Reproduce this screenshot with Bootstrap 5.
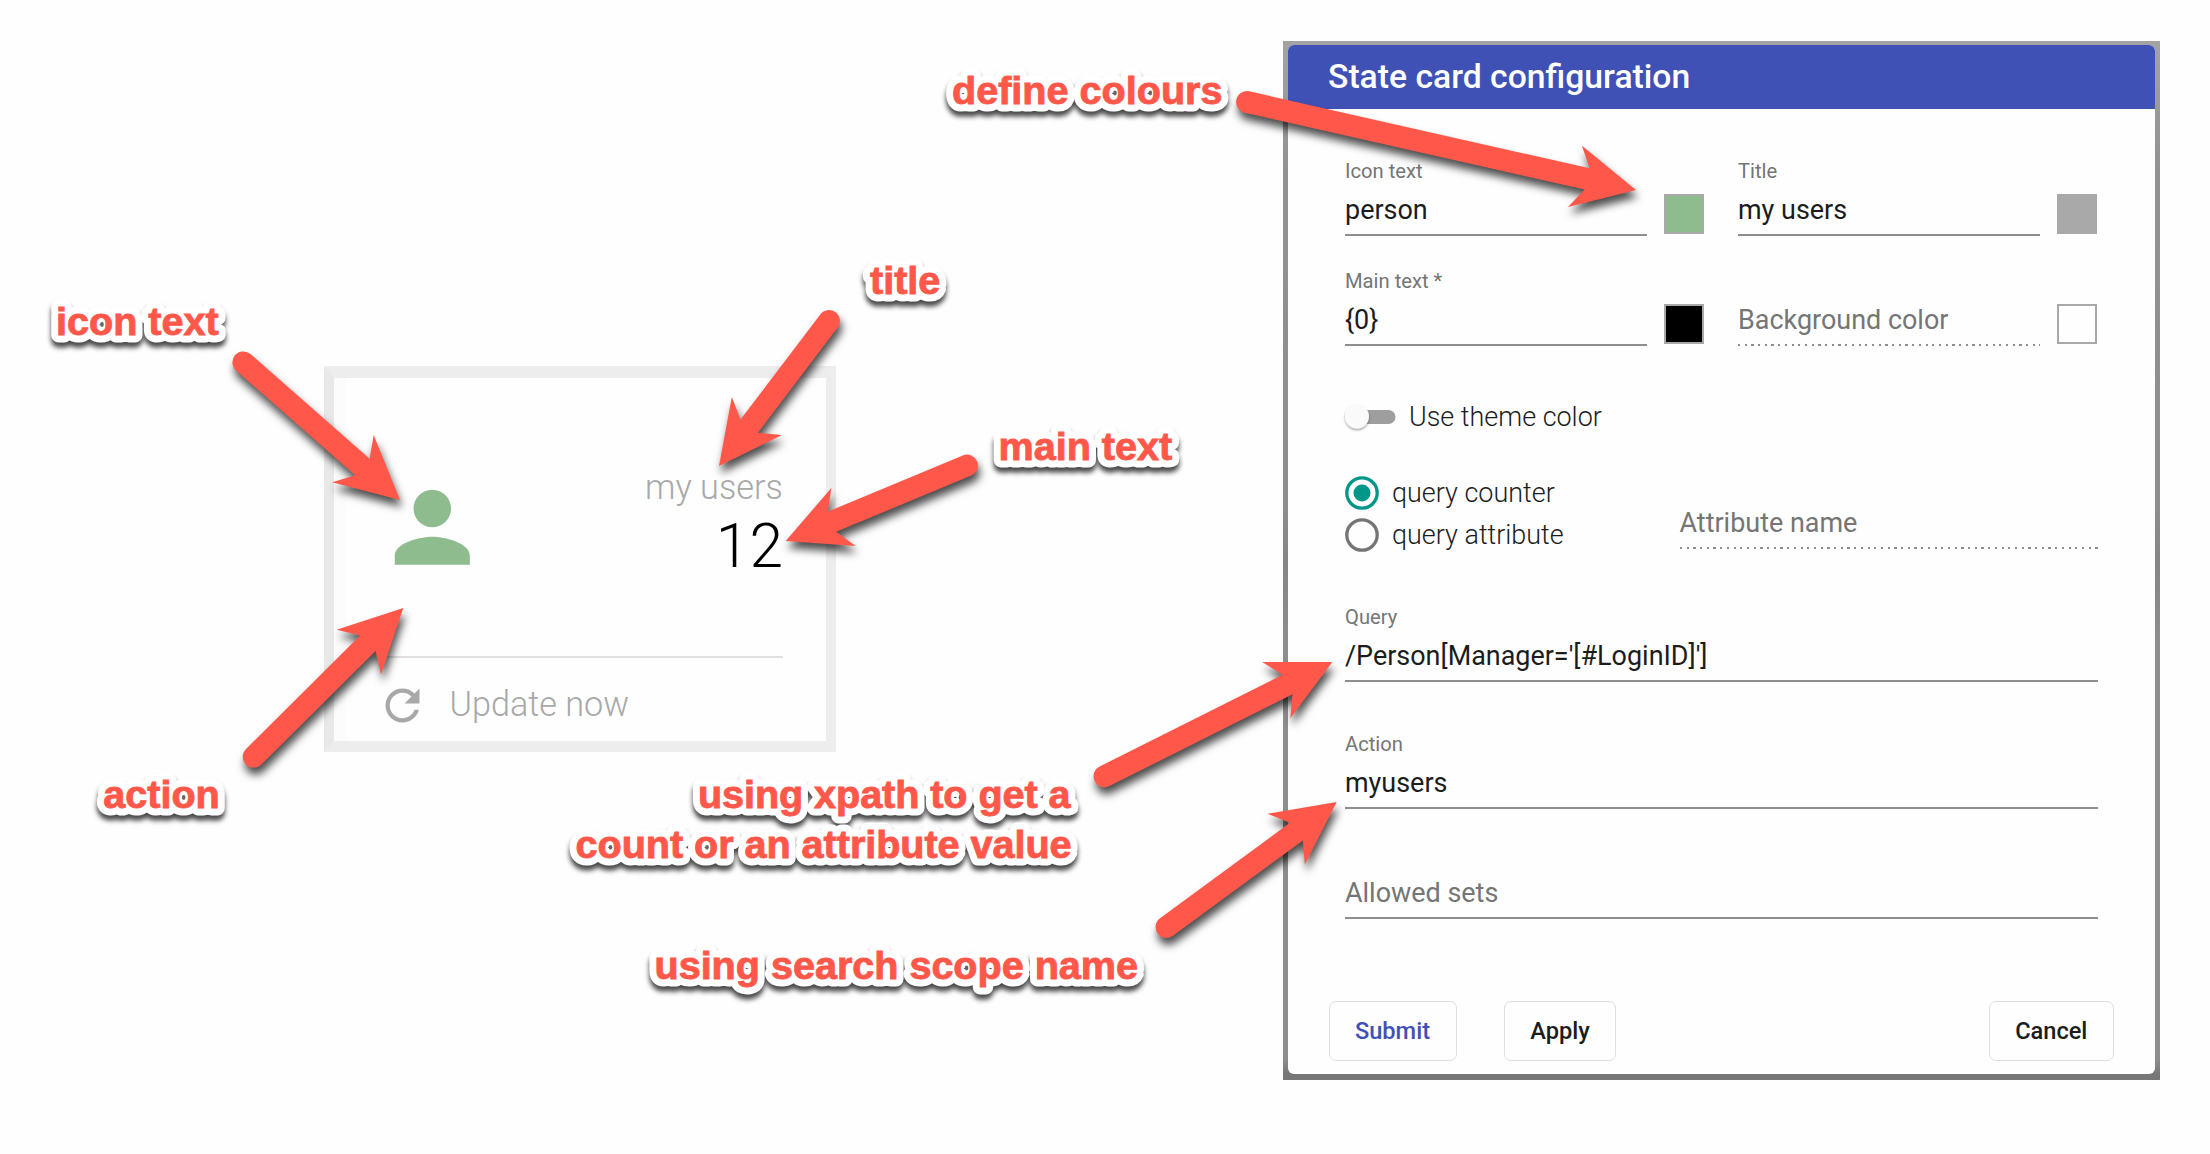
<!DOCTYPE html>
<html lang="en">
<head>
<meta charset="utf-8">
<title>State card configuration</title>
<link href="https://cdn.jsdelivr.net/npm/bootstrap@5.3.0/dist/css/bootstrap.min.css" rel="stylesheet">
<style>
body{font-family:Roboto,"Liberation Sans",sans-serif;width:2210px;height:1154px;overflow:hidden;background:#fefefe;color:#1c1c1c}
.stage{height:1154px}
/* state card */
.state-card{width:512px;height:386px;margin:366px 447px 0 324px;border:solid #ededed;border-width:12px 10px 11px;border-left-color:#e8e8e8;background:#fefefe;box-shadow:inset 12px 0 #fcfcfc;padding:0 43px 0 51px;font-weight:300;color:#a8a8a8}
.state-main{height:280px;border-bottom:2px solid #e0e0e0;padding-top:89px}
.state-icon{width:112.6px;height:112.6px;margin:4px 0 0 -9px;fill:#8fbc8f}
.state-title{font-size:34.3px;line-height:40px}
.state-count{font-size:60.6px;line-height:64px;margin-top:8px;color:#000}
.state-foot{height:83px;padding-top:11px;font-size:34.2px;gap:21.5px}
.state-foot svg{width:51px;height:51px;margin-left:-8px;fill:#a8a8a8}
/* dialog */
.backdrop-frame{width:877px;height:1039px;margin-top:41px;padding:4px 5px 6px;background:linear-gradient(#a3a3a3,#929292 12%,#8e8e8e 45%,#858585 50%,#8e8e8e 58%,#8e8e8e 98%,#777 99.4%)}
.config-dialog{height:1029px;border-radius:6px;overflow:hidden;background:#fefefe}
.config-head{height:64px;background:#3f51b5;color:#fff;font-size:33.7px;font-weight:500;line-height:64px;padding-left:40px}
.config-body{padding:50px 57px 0}
.pair{gap:34px}
.pair + .pair{margin-top:33px}
.field{height:77px;border-bottom:2px solid #8e8e8e}
.field .cap{height:24px;line-height:24px;font-size:20.2px;color:#757575}
.field .val{margin-top:10.5px;line-height:32px;font-size:26.95px;white-space:nowrap}
.field.blank .val{color:#757575}
.field.dotted{border:0;background:repeating-linear-gradient(90deg,#8e8e8e 0 2.2px,transparent 2.2px 6.7px) 0 100%/100% 2px no-repeat}
.short{width:302px}
.swatch{width:40px;height:40px;border:2px solid #a9a9a9;margin:0 0 2px 17px}
.sw-green{background:#8fbc8f}.sw-grey{background:#a9a9a9}.sw-black{background:#000}
.light{font-weight:300;font-size:26.95px;line-height:32px}
.toggle-row{margin-top:55px;height:32px;gap:13px}
.toggle-row svg{width:51px;height:32px;overflow:visible}
.radio-row{height:42px;gap:13px}
.radio-row svg{width:34px;height:34px}
.mode-row{margin-top:39px}
.attr{width:418.5px;margin-bottom:7px}
.config-foot{padding:0 41px 0 40.5px;margin-top:82px}
.dlg-btn{height:60px;border:1.5px solid #dedede;border-radius:7px;font-size:23.6px;font-weight:500;line-height:57px;padding:0;color:#1c1c1c;background:#fefefe}
/* call-outs */
.callouts{position:absolute;left:0;top:0;pointer-events:none}
.callouts text{font:bold 39.6px "Liberation Sans",sans-serif}
.note-face{fill:#ff584a;stroke:#ff584a;stroke-width:.9px}
.note-halo{fill:#fff;stroke:#fff;stroke-width:15px;stroke-linejoin:round;filter:drop-shadow(0 5.5px 2.5px rgba(0,0,0,.72))}
.arrow-shadow{filter:drop-shadow(2px 7px 4px rgba(0,0,0,.7))}
</style>
<script src="https://cdn.jsdelivr.net/npm/bootstrap@5.3.0/dist/js/bootstrap.bundle.min.js"></script>
</head>
<body>
<div class="stage d-flex align-items-start">
  <section class="state-card flex-shrink-0">
    <div class="state-main d-flex justify-content-between align-items-start">
      <svg class="state-icon" viewBox="0 0 24 24"><path d="M12 12c2.21 0 4-1.79 4-4s-1.79-4-4-4-4 1.79-4 4 1.79 4 4 4zm0 2c-2.67 0-8 1.34-8 4v2h16v-2c0-2.66-5.33-4-8-4z"/></svg>
      <div class="text-end">
        <div class="state-title">my users</div>
        <div class="state-count">12</div>
      </div>
    </div>
    <div class="state-foot d-flex align-items-center">
      <svg viewBox="0 0 24 24"><path d="M17.65 6.35C16.2 4.9 14.21 4 12 4c-4.42 0-7.99 3.58-7.99 8s3.57 8 7.99 8c3.73 0 6.84-2.55 7.73-6h-2.08c-.82 2.33-3.04 4-5.65 4-3.31 0-6-2.69-6-6s2.69-6 6-6c1.66 0 3.14.69 4.22 1.78L13 11h7V4l-2.35 2.35z"/></svg>
      <span>Update now</span>
    </div>
  </section>

  <section class="backdrop-frame flex-shrink-0">
    <div class="config-dialog">
      <div class="config-head">State card configuration</div>
      <div class="config-body">
        <div class="pair d-flex">
          <div class="d-flex align-items-end"><div class="field short"><div class="cap">Icon text</div><div class="val">person</div></div><div class="swatch sw-green"></div></div>
          <div class="d-flex align-items-end"><div class="field short"><div class="cap">Title</div><div class="val">my users</div></div><div class="swatch sw-grey"></div></div>
        </div>
        <div class="pair d-flex">
          <div class="d-flex align-items-end"><div class="field short"><div class="cap">Main text *</div><div class="val">{0}</div></div><div class="swatch sw-black"></div></div>
          <div class="d-flex align-items-end"><div class="field short blank dotted"><div class="cap"></div><div class="val">Background color</div></div><div class="swatch"></div></div>
        </div>
        <div class="toggle-row d-flex align-items-center light">
          <svg viewBox="0 0 51 32"><defs><filter id="knob" x="-50%" y="-50%" width="200%" height="200%"><feDropShadow dx="0" dy="1.5" stdDeviation="1.3" flood-opacity=".4"/></filter></defs><rect x="2" y="9" width="48.5" height="14" rx="7" fill="#9e9e9e"/><circle cx="12" cy="15.5" r="12" fill="#fafafa" filter="url(#knob)"/></svg>
          <span>Use theme color</span>
        </div>
        <div class="mode-row d-flex justify-content-between align-items-end">
          <div>
            <div class="radio-row d-flex align-items-center light"><svg viewBox="0 0 34 34" fill="none"><circle cx="17" cy="17" r="15.2" stroke="#009688" stroke-width="3.3"/><circle cx="17" cy="17" r="8.5" fill="#009688"/></svg><span>query counter</span></div>
            <div class="radio-row d-flex align-items-center light"><svg viewBox="0 0 34 34" fill="none"><circle cx="17" cy="17" r="15.2" stroke="#757575" stroke-width="3.3"/></svg><span>query attribute</span></div>
          </div>
          <div class="field attr blank dotted"><div class="cap"></div><div class="val">Attribute name</div></div>
        </div>
        <div class="field" style="margin-top:49px"><div class="cap">Query</div><div class="val">/Person[Manager='[#LoginID]']</div></div>
        <div class="field" style="margin-top:50px"><div class="cap">Action</div><div class="val">myusers</div></div>
        <div class="field blank" style="margin-top:33px"><div class="cap"></div><div class="val">Allowed sets</div></div>
      </div>
      <div class="config-foot d-flex">
        <button class="btn dlg-btn" style="width:128px;color:#3f51b5">Submit</button>
        <button class="btn dlg-btn" style="width:112px;margin-left:47.5px">Apply</button>
        <button class="btn dlg-btn ms-auto" style="width:125.5px">Cancel</button>
      </div>
    </div>
  </section>
</div>

<svg class="callouts" width="2210" height="1154" viewBox="0 0 2210 1154">
  <g class="note-halo"><use href="#notes"/></g>
  <!-- shadow visible through the letter counters -->
  <g fill="#666">
    <ellipse cx="102" cy="324.5" rx="1.8" ry="2.4"/><ellipse cx="1115" cy="93" rx="1.8" ry="2.4"/><ellipse cx="1150.3" cy="93" rx="1.8" ry="2.4"/>
    <ellipse cx="183.7" cy="797.5" rx="1.8" ry="2.4"/><ellipse cx="960.5" cy="797.5" rx="1.8" ry="2.4"/><ellipse cx="610.5" cy="847.3" rx="1.8" ry="2.4"/>
    <ellipse cx="707" cy="847.3" rx="1.8" ry="2.4"/><ellipse cx="966.6" cy="968" rx="1.8" ry="2.4"/>
  </g>
  <g class="note-face">
    <g id="notes">
      <text x="56" y="335">icon text</text>
      <text x="870" y="294.3">title</text>
      <text x="998.5" y="460.3">main text</text>
      <text x="952" y="103.7">define colours</text>
      <text x="103.2" y="808.3">action</text>
      <text x="698" y="808" textLength="372.5">using xpath to get a</text>
      <text x="575.6" y="858" textLength="496">count or an attribute value</text>
      <text x="654.5" y="978.7" textLength="483.5">using search scope name</text>
    </g>
  </g>
  <g id="arrows" fill="#ff584a"></g>
</svg>
<script>
  // each arrow: tail centre, then tip
  const arrows = [
    [243.3,362.3,400,500],[829,321,719,466],[967,465.5,785.7,541],[1247,102,1636,190],
    [253.7,756.7,403.3,608],[1104.5,776.3,1332.3,662],[1166.5,927,1336.7,802]
  ];
  document.getElementById('arrows').innerHTML = arrows.map(([x1,y1,x2,y2]) => {
    const len = Math.hypot(x2-x1, y2-y1), a = Math.atan2(y2-y1, x2-x1)*180/Math.PI;
    return `<g class="arrow-shadow"><path transform="translate(${x2} ${y2}) rotate(${a})" d="M0 0L-62.7 -31.5L-50 -10.9H${-len}A10.9 10.9 0 0 0 ${-len} 10.9H-50L-62.7 31.5Z"/></g>`;
  }).join('');
</script>
</body>
</html>
